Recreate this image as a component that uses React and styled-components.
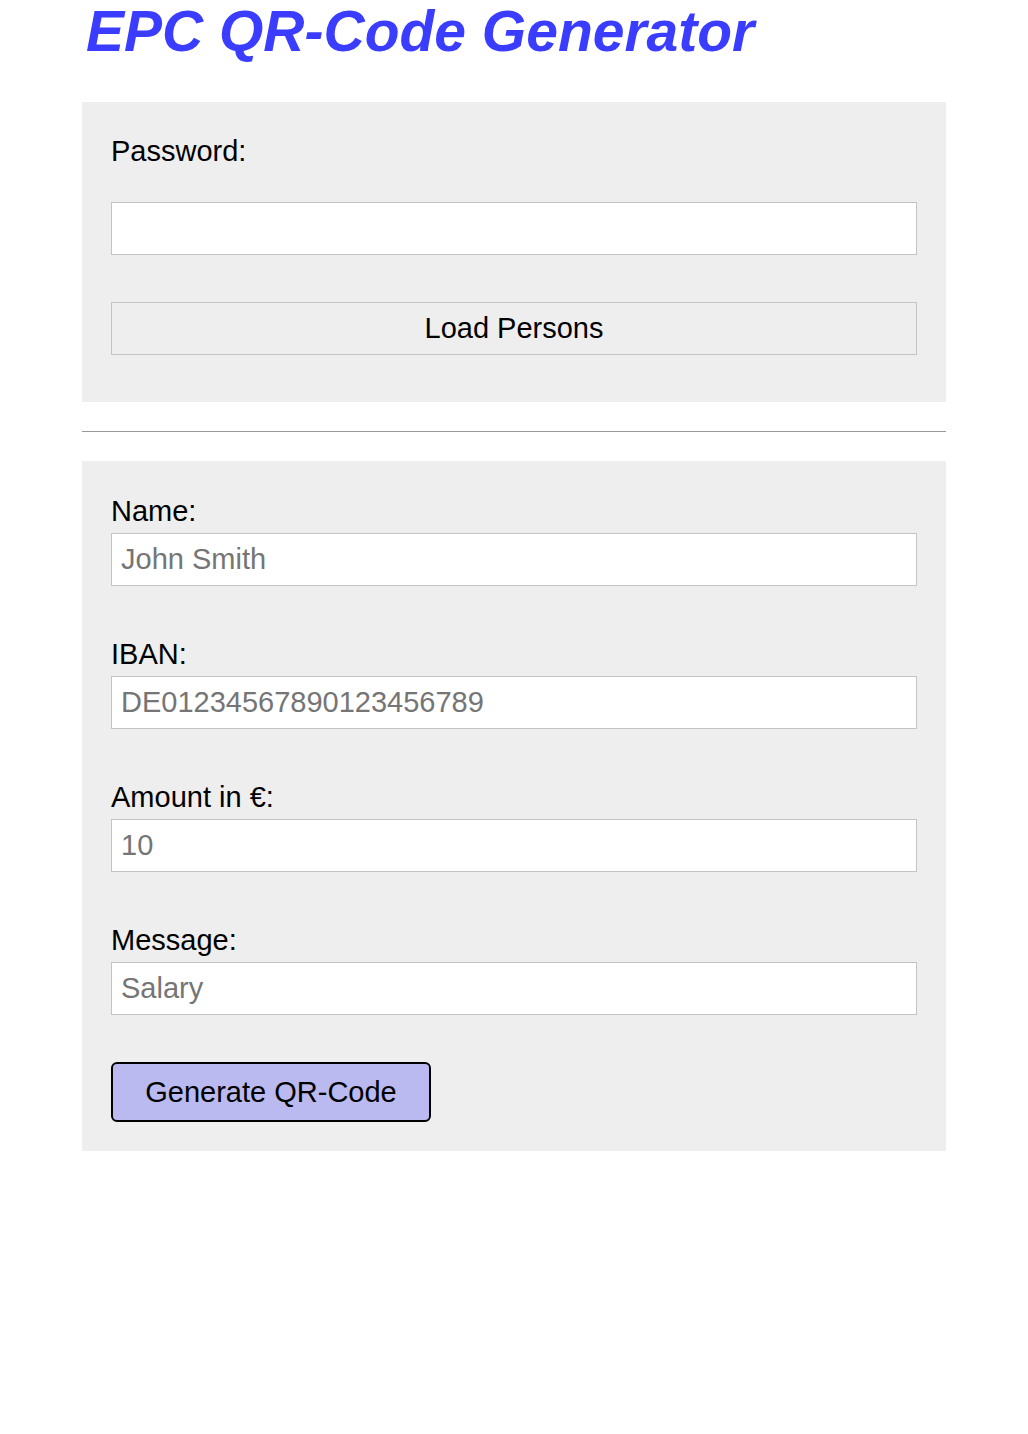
import styled, { createGlobalStyle } from "styled-components";

const GlobalStyle = createGlobalStyle`
  body {
    margin: 0;
    background: #ffffff;
    font-family: "Liberation Sans", Arial, Helvetica, sans-serif;
  }
`;

const fields = [
  { label: "Name:", placeholder: "John Smith" },
  { label: "IBAN:", placeholder: "DE01234567890123456789" },
  { label: "Amount in €:", placeholder: "10" },
  { label: "Message:", placeholder: "Salary" },
];

export default function App() {
  return (
    <>
      <GlobalStyle />
      <Page>
        <Title>EPC QR-Code Generator</Title>
        <Panel $top={33} $bottom={47}>
          <Label>Password:</Label>
          <TextInput type="password" $mt={35} />
          <LoadButton>Load Persons</LoadButton>
        </Panel>
        <Divider />
        <Panel $top={34} $bottom={29}>
          {fields.map((f, i) => (
            <Field key={f.label} $first={i === 0}>
              <Label>{f.label}</Label>
              <TextInput placeholder={f.placeholder} $mt={6} />
            </Field>
          ))}
          <GenerateButton>Generate QR-Code</GenerateButton>
        </Panel>
      </Page>
    </>
  );
}

const Page = styled.div`
  width: 864px;
  margin: 0 auto;
  display: flex;
  flex-direction: column;
`;

const Title = styled.h1`
  margin: 0 0 40px 4px;
  color: #3a3cff;
  font-size: 57px;
  font-style: italic;
  font-weight: 700;
  line-height: 62px;
`;

const Panel = styled.div`
  background: #eeeeee;
  padding: ${(p) => p.$top}px 29px ${(p) => p.$bottom}px;
  display: flex;
  flex-direction: column;
`;

const Field = styled.div`
  display: flex;
  flex-direction: column;
  margin-top: ${(p) => (p.$first ? 0 : 52)}px;
`;

const Label = styled.label`
  font-size: 29px;
  line-height: 32px;
  color: #000;
`;

const TextInput = styled.input`
  box-sizing: border-box;
  width: 100%;
  height: 53px;
  margin-top: ${(p) => p.$mt}px;
  padding: 0 9px;
  border: 1px solid #c4c4c4;
  background: #fff;
  font-family: inherit;
  font-size: 29px;
  color: #000;
  outline: none;
  &::placeholder {
    color: #757575;
  }
`;

const LoadButton = styled.button`
  box-sizing: border-box;
  width: 100%;
  height: 53px;
  margin-top: 47px;
  border: 1px solid #c4c4c4;
  background: #eeeeee;
  font-family: inherit;
  font-size: 29px;
  color: #000;
`;

const Divider = styled.hr`
  width: 100%;
  margin: 29px 0;
  border: none;
  border-top: 1px solid #999;
`;

const GenerateButton = styled.button`
  box-sizing: border-box;
  width: 320px;
  height: 60px;
  margin-top: 47px;
  border: 2px solid #000;
  border-radius: 6px;
  background: #babaf0;
  font-family: inherit;
  font-size: 29px;
  color: #000;
`;
